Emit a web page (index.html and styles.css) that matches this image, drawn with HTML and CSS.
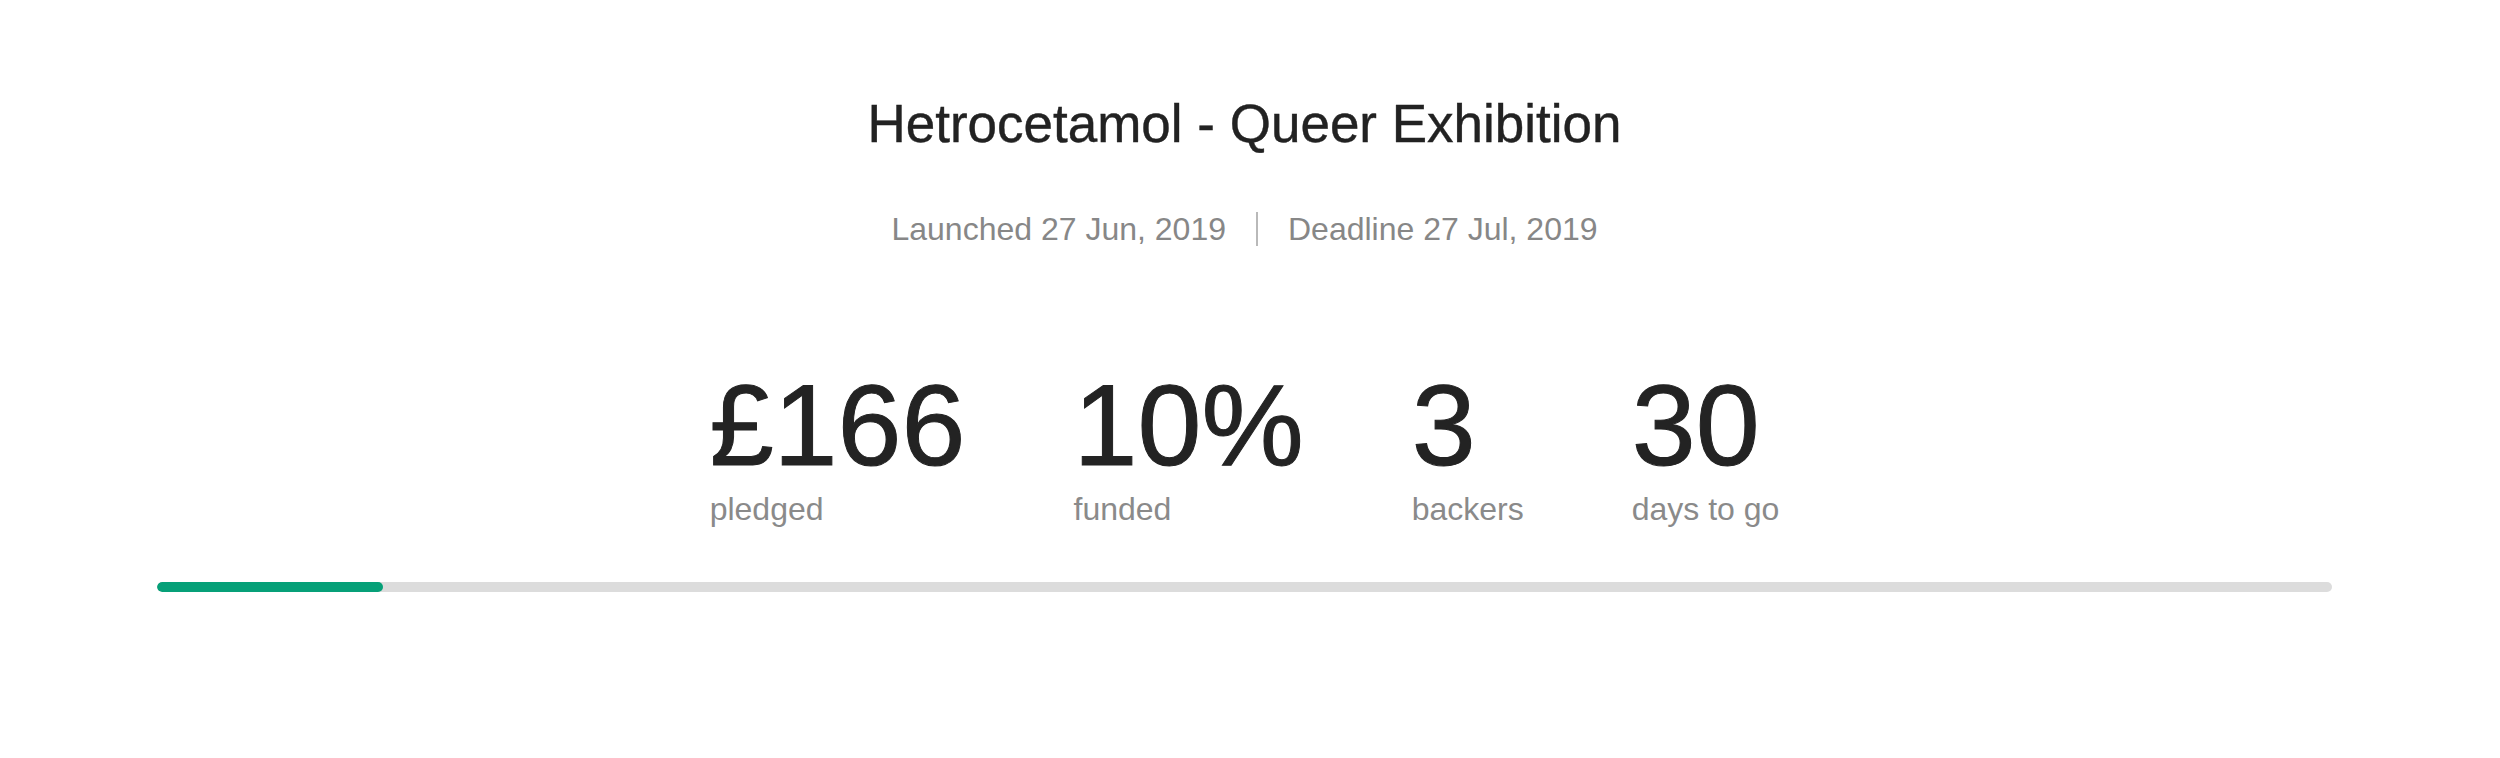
FILE: index.html
```html
<!DOCTYPE html>
<html lang="en">
<head>
  <meta charset="UTF-8" />
  <meta name="viewport" content="width=device-width, initial-scale=1.0"/>
  <title>Hetrocetamol - Queer Exhibition</title>
  <link rel="stylesheet" href="styles.css">
</head>
<body>
  <!-- Project summary -->
  <div class="project">
    <h1 class="project-title">Hetrocetamol - Queer Exhibition</h1>

    <div class="project-dates">
      <span>Launched 27 Jun, 2019</span>
      <span class="divider"></span>
      <span>Deadline 27 Jul, 2019</span>
    </div>

    <div class="stats">
      <div class="stat">
        <div class="stat-value">£166</div>
        <div class="stat-label">pledged</div>
      </div>
      <div class="stat">
        <div class="stat-value">10%</div>
        <div class="stat-label">funded</div>
      </div>
      <div class="stat">
        <div class="stat-value">3</div>
        <div class="stat-label">backers</div>
      </div>
      <div class="stat">
        <div class="stat-value">30</div>
        <div class="stat-label">days to go</div>
      </div>
    </div>

    <div class="progress">
      <div class="progress-fill" style="width: 10.4%;"></div>
    </div>
  </div>
</body>
</html>
```

FILE: styles.css
```css
body {
  margin: 0;
  font-family: "Liberation Sans", Arial, sans-serif;
  background-color: #ffffff;
  color: #282828;
  height: 100vh;
  overflow: hidden;
}

.project {
  padding: 92px 168px 0 157px;
  display: flex;
  flex-direction: column;
  align-items: center;
}

.project-title {
  margin: 0;
  font-size: 53px;
  line-height: 64px;
  font-weight: normal;
  color: #222222;
  -webkit-text-stroke: 0.4px #222222;
}

.project-dates {
  margin-top: 53px;
  display: flex;
  align-items: center;
  gap: 30px;
  font-size: 32px;
  line-height: 40px;
  color: #878787;
}

.divider {
  width: 2px;
  height: 34px;
  background-color: #b9b9b9;
}

.stats {
  margin-top: 120px;
  display: flex;
  gap: 108px;
}

.stat-value {
  font-size: 115px;
  line-height: 112px;
  color: #232323;
  -webkit-text-stroke: 1px #232323;
}

.stat-label {
  margin-top: 8px;
  font-size: 32px;
  line-height: 40px;
  color: #8a8a8a;
}

.progress {
  align-self: stretch;
  margin-top: 53px;
  height: 10px;
  border-radius: 5px;
  background-color: #dcdcdc;
  overflow: hidden;
}

.progress-fill {
  height: 100%;
  border-radius: 5px;
  background-color: #06a078;
}
```
